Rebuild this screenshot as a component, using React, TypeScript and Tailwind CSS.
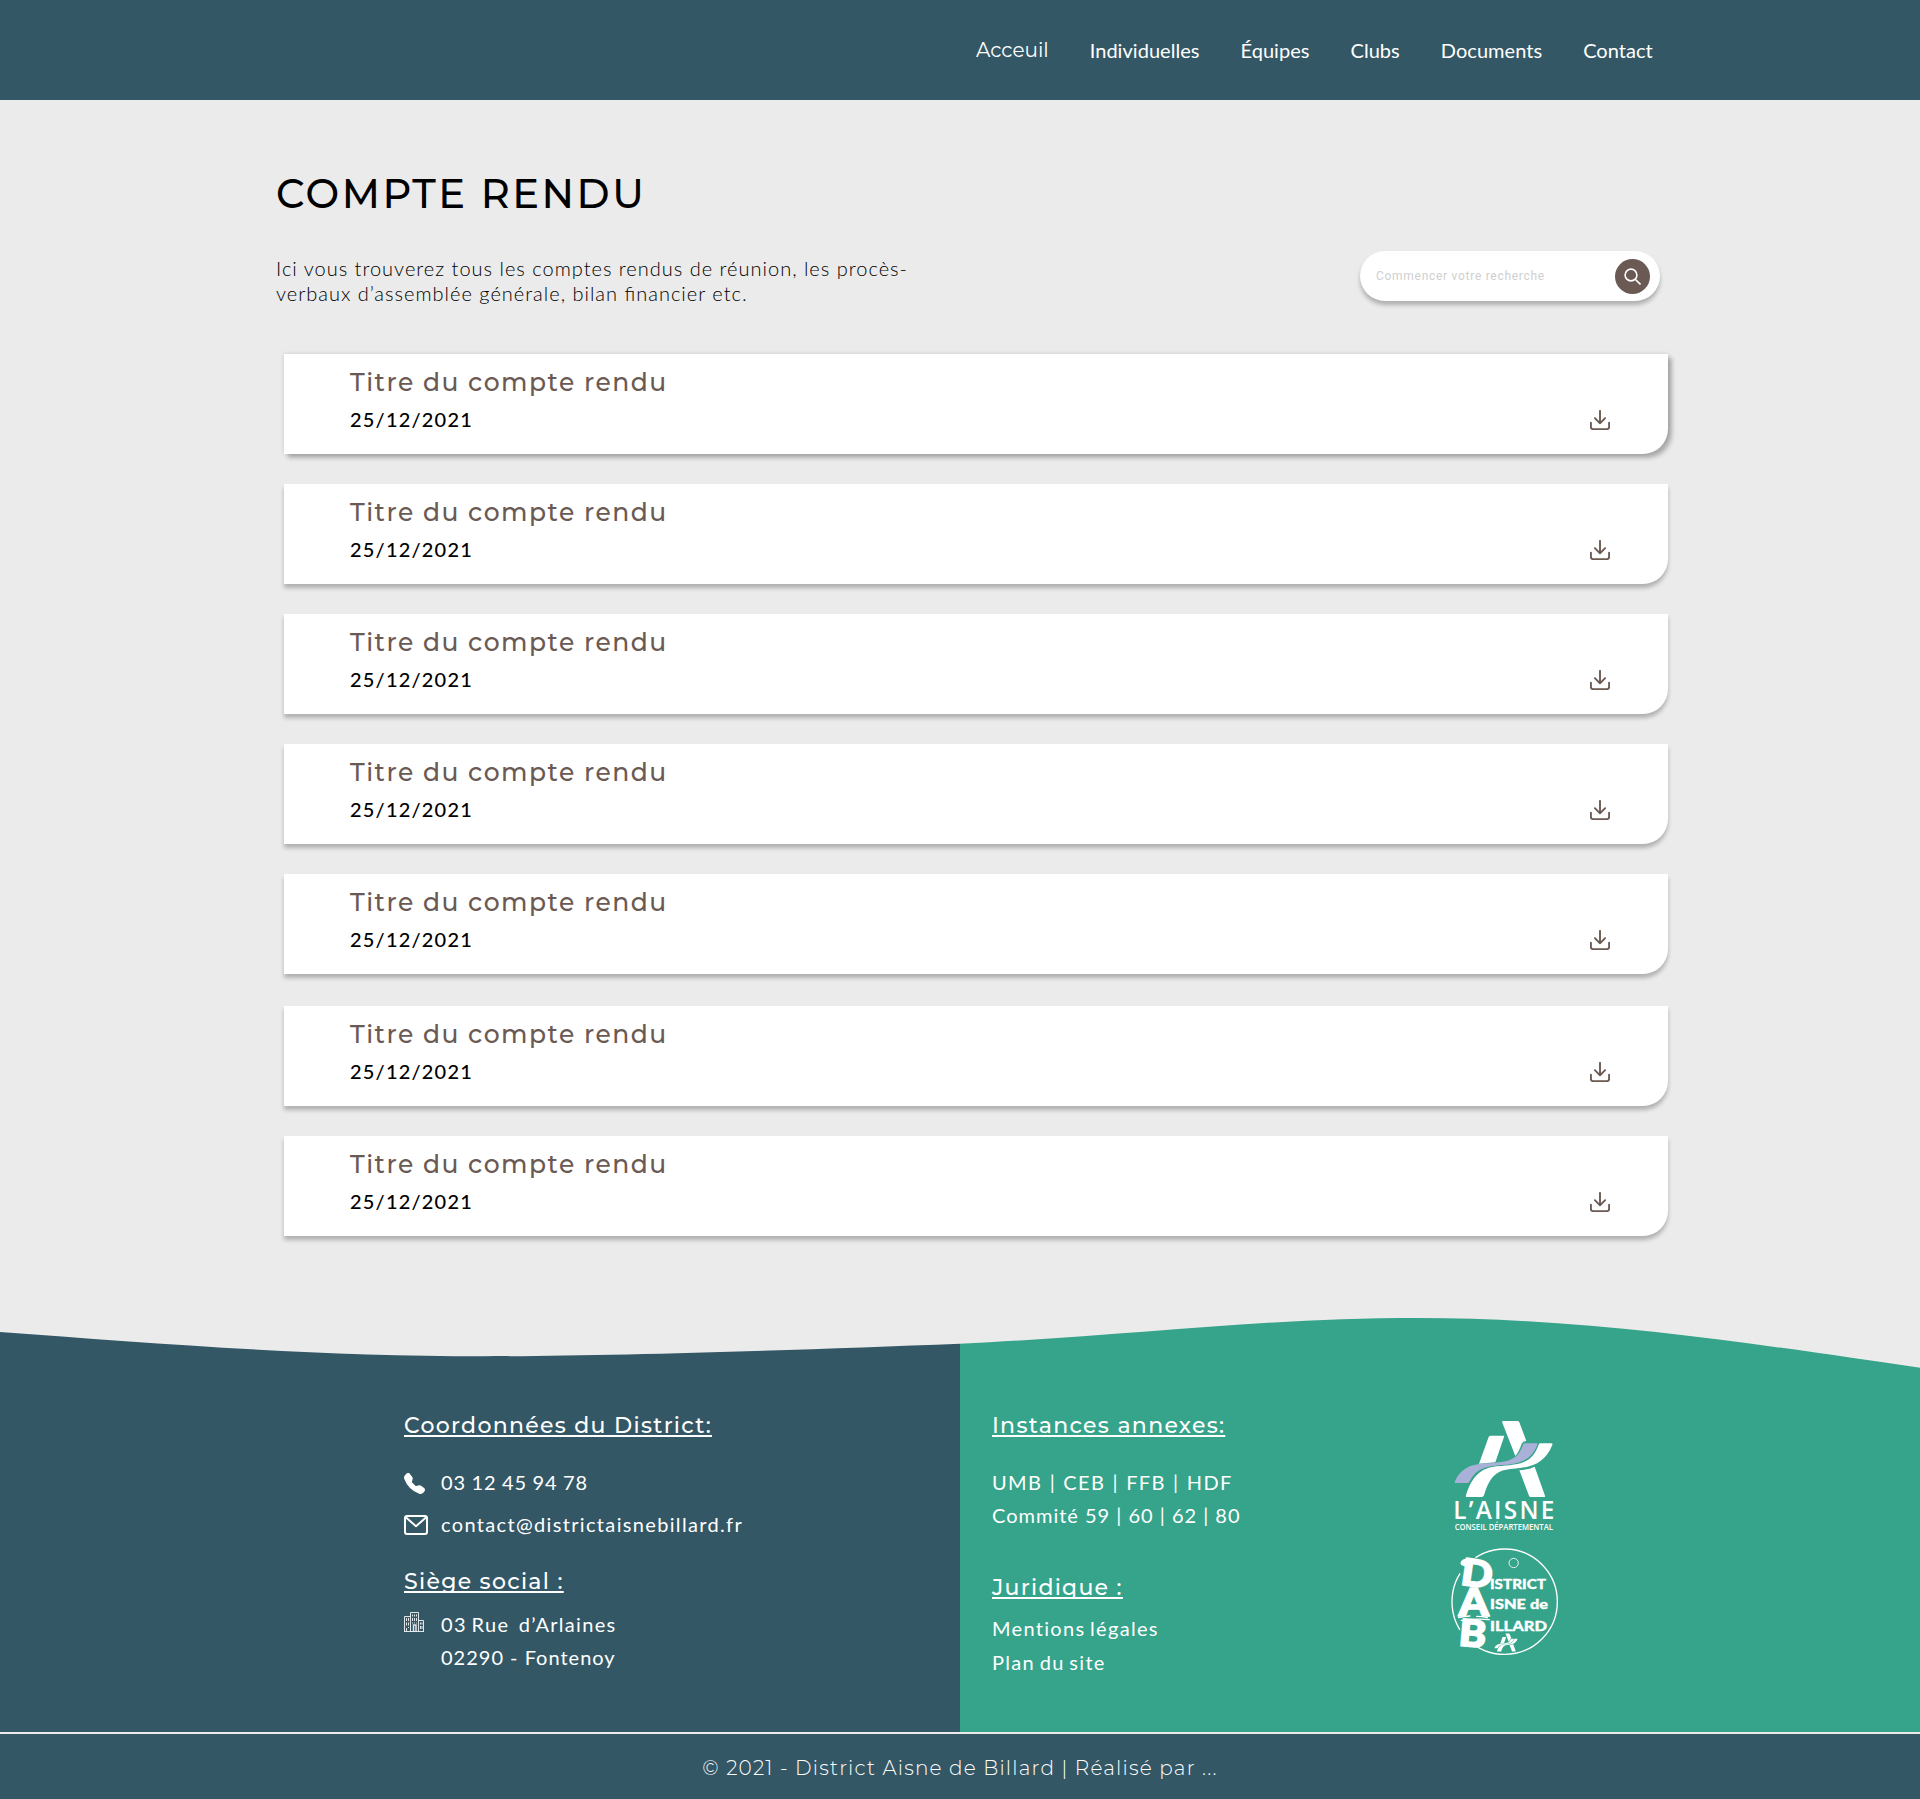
import { BsTelephoneFill } from "react-icons/bs";

const navLinks = ["Individuelles", "Équipes", "Clubs", "Documents", "Contact"];

const reports = [1, 2, 3, 4, 5, 6, 7].map((id) => ({
  id,
  title: "Titre du compte rendu",
  date: "25/12/2021",
}));

function DownloadIcon() {
  return (
    <svg viewBox="0 0 20 20" className="size-5" fill="none" stroke="#6b5a53" strokeWidth="1.9" strokeLinecap="round" strokeLinejoin="round">
      <path d="M10 .9v12.4M4.9 8.2l5.1 5.1 5.1-5.1" />
      <path d="M.9 12.6v4.5a2 2 0 0 0 2 2h14.2a2 2 0 0 0 2-2v-4.5" />
    </svg>
  );
}

function SearchIcon() {
  return (
    <svg viewBox="0 0 17 17" className="size-[17px]" fill="none" stroke="#fff" strokeWidth="1.6">
      <circle cx="7" cy="7" r="5.9" />
      <path d="M11.2 11.2 16.5 16.5" />
    </svg>
  );
}

function MailIcon() {
  return (
    <svg viewBox="0 0 24 20" className="mt-px h-5 w-6" fill="none" stroke="#fff" strokeWidth="2" strokeLinejoin="round">
      <rect x="1" y="1" width="22" height="18" rx="2" />
      <path d="M1.5 2 12 11.2 22.5 2" />
    </svg>
  );
}

function BuildingIcon() {
  return (
    <svg viewBox="0 0 20 20" className="size-5" fill="none" stroke="#fff" strokeOpacity=".85" strokeWidth="1">
      <path d="M.5 19.5v-15H6M6.5 19.5V.5h8v19M14.500 8.500h5v11M0 19.500h20" />
      <path d="M2.500 6v3M4.500 6v3M2.500 10.500v3M4.500 10.500v3M2.500 16v3M4.500 15v1M8.500 2.500v2M10.500 2.500v2M12.500 2.500v2M8.500 6v3M10.500 6v3M12.500 6v3M8.500 10.500v1M10.500 10.500v1M12.500 10.500v1M16.500 10.500v2M18 10.500v2M16.500 14v3M18 14v3" />
      <path d="M9.500 19.500v-6.500h2.500v6.500" strokeWidth="1.500" />
    </svg>
  );
}

function AisneMark({ band }: { band: string }) {
  return (
    <g fill="#fff">
      <path d="M219 63h43q4 0 6 4l21 56q-10 1-14 8-8 24-19 37L217 68q-2-5 2-5Z" />
      <path d="M182 107h38q4 0 2 4l-26 76-49 4 29-80q2-4 6-4Z" />
      <path fill={band} d="M285 130h35q4 0 2 4c-17 45-50 57-105 61-65 4-80 18-99 50q-2 4-6 4H78q-5 0-3-5c16-36 42-50 90-54 70-4 98-8 114-56q2-4 6-4Z" />
      <path d="M332 130h32q5 0 3 5c-22 54-62 68-117 71-50 3-70 22-88 80q-2 5-7 5h-44q-5 0-3-5c17-54 42-82 92-87 75-6 106-10 126-65q2-4 6-4Z" />
      <path d="M268 211q28-2 46-11l31 87q1 4-3 4h-40q-4 0-5-4Z" />
    </g>
  );
}

function AisneLogo() {
  return (
    <svg viewBox="75 60 303 336" className="h-[112px] w-[101px] overflow-visible">
      <AisneMark band="#a9b1d9" />
      <text x="70" y="356" fill="#fff" fontFamily="Open Sans" fontWeight="600" fontSize="73" textLength="303" lengthAdjust="spacing">L’AISNE</text>
      <text x="74" y="389" fill="#fff" fontFamily="Open Sans" fontWeight="600" fontSize="26" textLength="295" lengthAdjust="spacingAndGlyphs">CONSEIL DÉPARTEMENTAL</text>
    </svg>
  );
}

function DistrictLogo() {
  return (
    <svg viewBox="63 53 324 324" className="size-[108px]" fill="#fff">
      <g fill="none" stroke="#fff">
        <circle cx="224" cy="214" r="158" strokeWidth="4" />
        <circle cx="251" cy="98" r="14" strokeWidth="2.5" />
      </g>
      <g fill="#36a48b">
        <ellipse cx="120" cy="112" rx="34" ry="34" />
        <ellipse cx="118" cy="322" rx="36" ry="38" />
      </g>
      <ellipse cx="108" cy="96" rx="17" ry="11" transform="rotate(-15 108 96)" />
      <path d="M86 262q18-5 34-5M140 258q18 0 32 4M94 270q45-6 84-2" fill="none" stroke="#fff" strokeWidth="4" strokeLinecap="round" />
      <g fontFamily="Lato" fontWeight="900" fontSize="112" stroke="#fff" strokeWidth="5" strokeLinejoin="round">
        <text transform="rotate(8 140 130)" x="94" y="169" textLength="94" lengthAdjust="spacingAndGlyphs">D</text>
        <text x="86" y="258" textLength="90" lengthAdjust="spacingAndGlyphs">A</text>
        <text transform="rotate(5 126 310)" x="87" y="349" textLength="82" lengthAdjust="spacingAndGlyphs">B</text>
      </g>
      <g fontFamily="Lato" fontWeight="900" fontSize="41" stroke="#fff" strokeWidth="1">
        <text x="180" y="177" textLength="168" lengthAdjust="spacingAndGlyphs">ISTRICT</text>
        <text x="180" y="236" textLength="174" lengthAdjust="spacingAndGlyphs">ISNE de</text>
        <text x="180" y="301" textLength="171" lengthAdjust="spacingAndGlyphs">ILLARD</text>
      </g>
      <g transform="translate(176 295) scale(.235)"><AisneMark band="#fff" /></g>
    </svg>
  );
}

function FooterHeading({ children }: { children: string }) {
  return (
    <h2 className="font-['Montserrat',sans-serif] text-[22px] leading-[27px] font-medium tracking-[0.059em] [word-spacing:0] whitespace-pre underline [text-decoration-skip-ink:none]">
      {children}
    </h2>
  );
}

export default function App() {
  return (
    <div className="flex h-[1799px] w-[1920px] flex-col overflow-hidden bg-[#ebebeb] font-['Lato',sans-serif] text-xl text-black">
      <header className="flex h-[100px] shrink-0 items-center bg-[#345766] pl-[976px] text-white">
        <nav className="flex items-center gap-[41px]">
          <a className="font-['Montserrat',sans-serif]">Acceuil</a>
          {navLinks.map((label) => (
            <a key={label} className="tracking-[0.002em]">{label}</a>
          ))}
        </nav>
      </header>

      <main className="h-[1218px] shrink-0 pt-[70px] pl-[276px]">
        <h1 className="font-['Montserrat',sans-serif] text-[40px] leading-[48px] font-medium tracking-[0.0625em]">COMPTE RENDU</h1>

        <div className="mt-[33px] flex h-[50px] w-[1384px] items-start justify-between">
          <p className="mt-[5px] leading-[25px] font-light tracking-[0.05em] [font-feature-settings:'liga']">
            Ici vous trouverez tous les comptes rendus de réunion, les procès-
            <br />
            verbaux d’assemblée générale, bilan financier etc.
          </p>
          <div className="flex h-[50px] w-[300px] items-center justify-between rounded-full bg-white pr-2.5 pl-4 shadow-[0_4px_4px_rgba(0,0,0,0.25)]">
            <span className="font-['Roboto',sans-serif] text-xs tracking-[0.06em] text-[#cfcfcf]">Commencer votre recherche</span>
            <button className="mt-px flex size-[35px] items-center justify-center rounded-full bg-[#6b5a53]">
              <SearchIcon />
            </button>
          </div>
        </div>

        <ul className="mt-[53px] ml-2 flex w-[1384px] flex-col gap-[30px]">
          {reports.map(({ id, title, date }) => (
            <li
              key={id}
              className="flex h-[100px] items-start justify-between rounded-br-[25px] bg-white pt-[13px] pr-[58px] pl-[66px] shadow-[0_4px_4px_rgba(0,0,0,0.25)] first:shadow-[4px_4px_4px_rgba(0,0,0,0.25),0_0_4px_rgba(0,0,0,0.15)] nth-6:mt-0.5"
            >
              <div>
                <h2 className="font-['Montserrat',sans-serif] text-[25px] leading-[30px] font-medium tracking-[0.06em] text-[#6b5a53]">{title}</h2>
                <p className="mt-2.5 leading-6 font-medium tracking-[0.06em]">{date}</p>
              </div>
              <button className="mt-[43px]" aria-label="Télécharger">
                <DownloadIcon />
              </button>
            </li>
          ))}
        </ul>
      </main>

      <footer className="shrink-0 text-white">
        <svg viewBox="0 0 1920 50" className="block h-[50px] w-full">
          <path fill="#345766" d="M0 14C150 25 310 38.200 484 38.200C606 38.200 800 32 960 25.700V50H0Z" />
          <path fill="#36a48b" d="M960 25.700C1130 18 1255 0 1418 0C1602 0 1780 30 1920 49.700V50H960Z" />
        </svg>
        <div className="grid h-[364px] grid-cols-2 tracking-[0.065em] [word-spacing:-1.7px]">
          <section className="bg-[#345766] pt-11 pl-[404px]">
            <FooterHeading>Coordonnées du District:</FooterHeading>
            <div className="mt-[31px] flex items-center leading-6">
              <span className="w-[37px]"><BsTelephoneFill className="mt-0.5 size-[21px]" /></span>
              <span className="tracking-[0.04em] [word-spacing:-0.2px]">03 12 45 94 78</span>
            </div>
            <div className="mt-[18px] flex items-center leading-6">
              <span className="w-[37px]"><MailIcon /></span>
              <span className="tracking-[0.067em]">contact@districtaisnebillard.fr</span>
            </div>
            <div className="mt-8"><FooterHeading>Siège social :</FooterHeading></div>
            <div className="mt-[13px] flex items-start leading-[33px]">
              <span className="mt-1 w-[37px]"><BuildingIcon /></span>
              <p className="whitespace-pre">
                {"03 Rue  d’Arlaines\n"}
                <span className="tracking-[0.05em] [word-spacing:0]">02290 - Fontenoy</span>
              </p>
            </div>
          </section>
          <section className="flex bg-[#36a48b] pt-11 pl-8">
            <div className="w-[459px]">
              <FooterHeading>Instances annexes:</FooterHeading>
              <p className="mt-[27px] leading-[33px] tracking-[0.05em] [word-spacing:0]">
                <span className="tracking-[0.07em] [word-spacing:0.7px]">UMB | CEB | FFB | HDF</span>
                <br />
                Commité 59 | 60 | 62 | 80
              </p>
              <div className="mt-[42px]"><FooterHeading>Juridique :</FooterHeading></div>
              <p className="mt-2.5 leading-[34px]">
                Mentions légales
                <br />
                Plan du site
              </p>
            </div>
            <div className="mt-2 flex w-[108px] flex-col items-center gap-4 tracking-normal [word-spacing:0]">
              <AisneLogo />
              <DistrictLogo />
            </div>
          </section>
        </div>
        <div className="flex h-[67px] justify-center border-t-2 border-[#ebebeb] bg-[#345766] pt-[21px] font-['Montserrat',sans-serif] leading-[26px] font-light tracking-[0.06em]">
          © 2021 - District Aisne de Billard | Réalisé par ...
        </div>
      </footer>
    </div>
  );
}
